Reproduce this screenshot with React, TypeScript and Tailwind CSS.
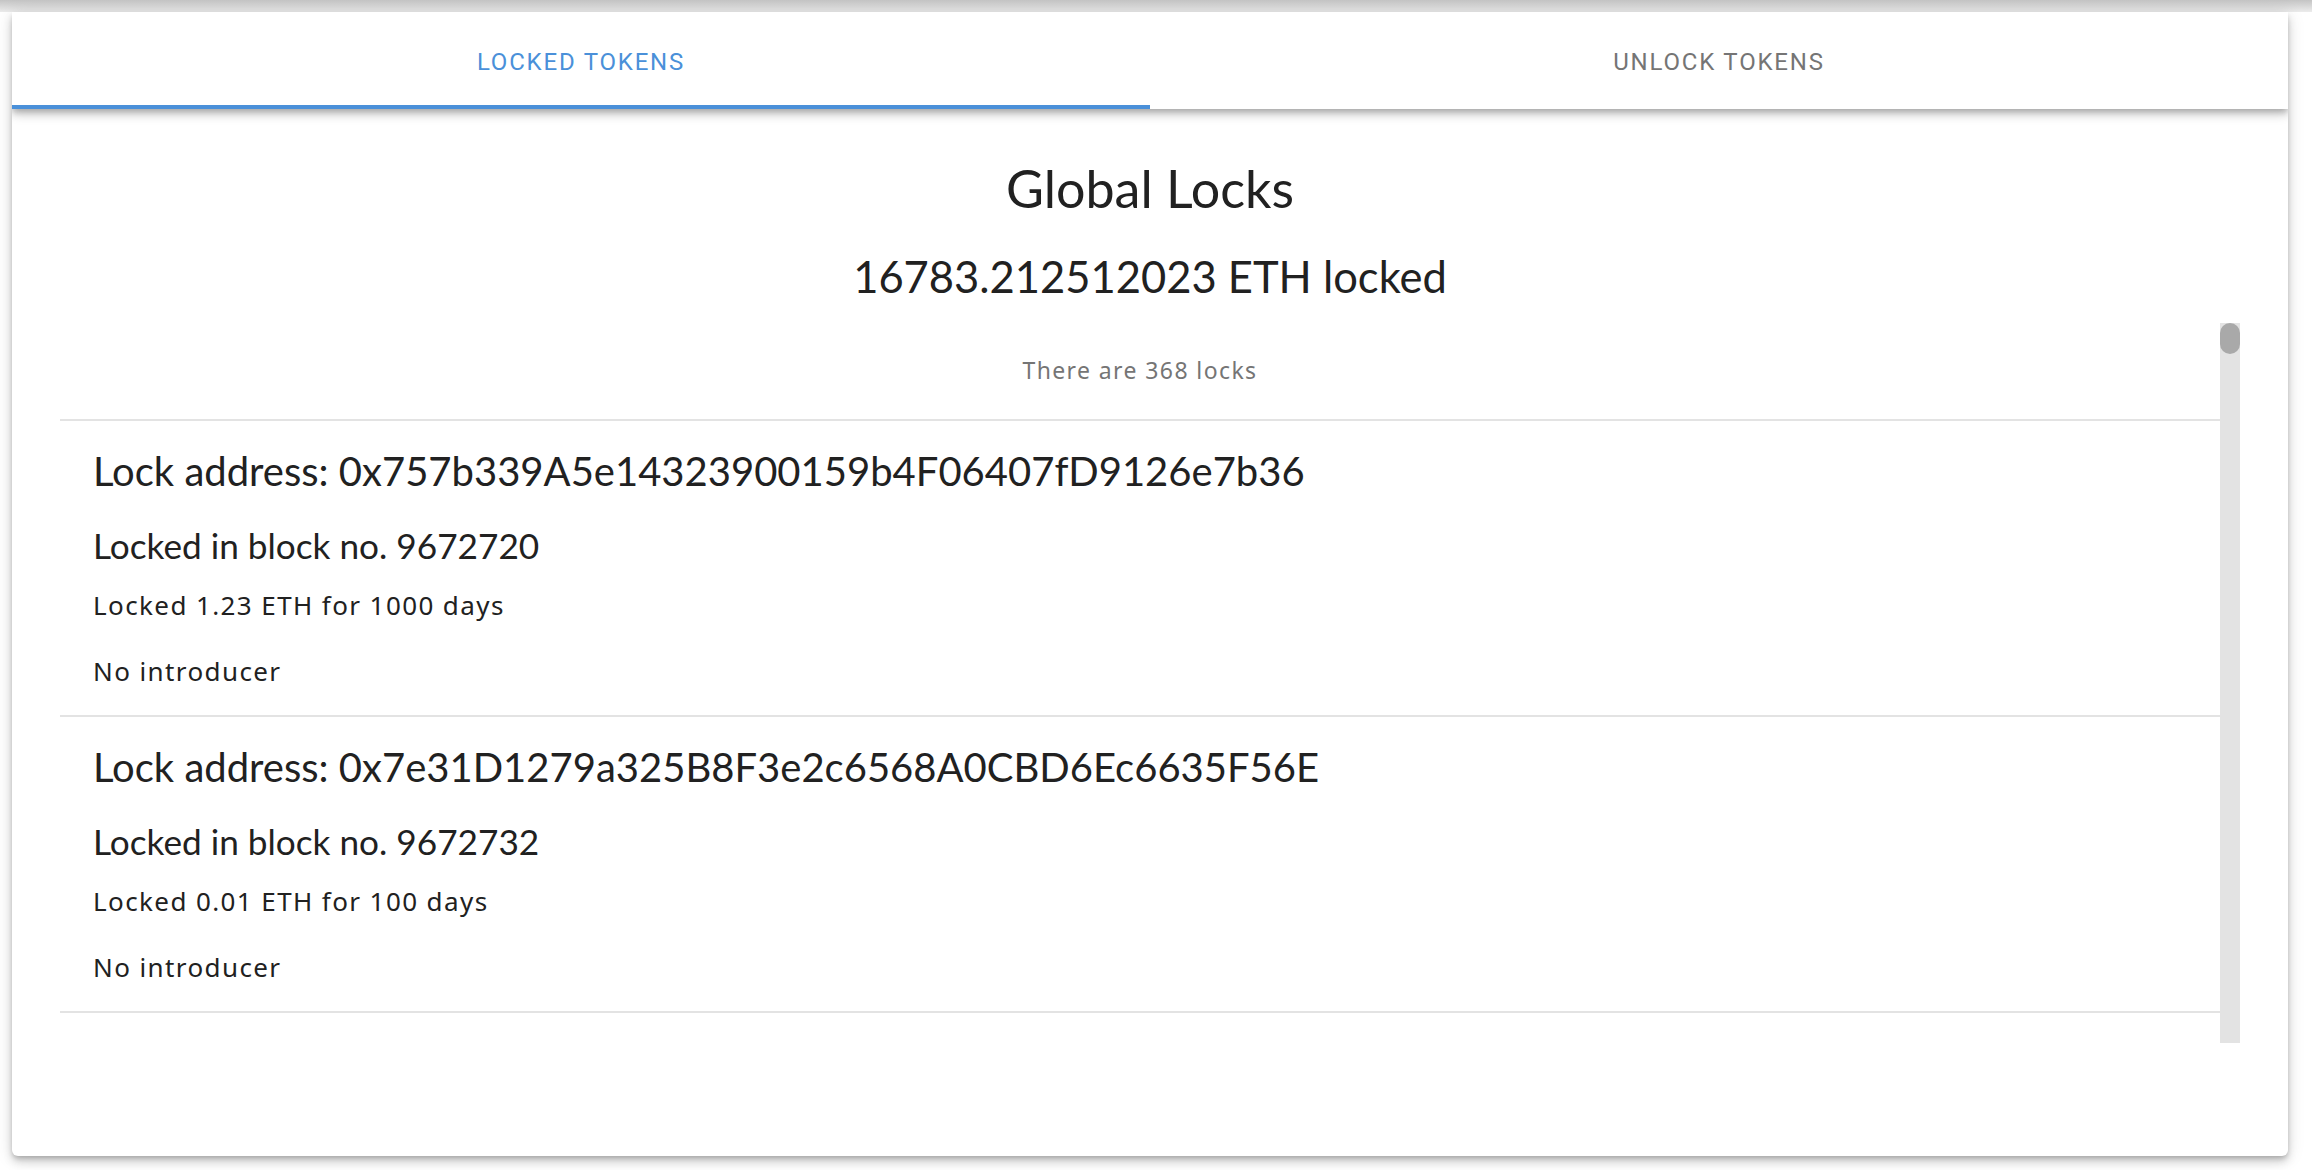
import { useState } from "react";

const locks = [
  { address: "0x757b339A5e14323900159b4F06407fD9126e7b36", block: 9672720, amount: "1.23", days: 1000 },
  { address: "0x7e31D1279a325B8F3e2c6568A0CBD6Ec6635F56E", block: 9672732, amount: "0.01", days: 100 },
];

const lato = "font-['Lato','Liberation_Sans',sans-serif]";
const body = "font-['Noto_Sans','Liberation_Sans',sans-serif]";

export default function App() {
  const [tab, setTab] = useState(0);
  const tabs = ["Locked tokens", "Unlock tokens"];

  return (
    <div className="min-h-screen bg-white">
      <div className="h-[12px] bg-gradient-to-b from-[#c4c4c4] to-[#ececec]" />
      <div className="ml-[12px] mr-[24px] h-[1144px] overflow-hidden rounded-b-[6px] bg-white shadow-[0_3px_5px_-1px_rgba(0,0,0,0.2),0_6px_10px_0_rgba(0,0,0,0.14),0_2px_18px_0_rgba(0,0,0,0.12)]">
        {/* Tabs */}
        <div className="relative z-10 flex h-[97px] bg-white shadow-[0_3px_6px_-1px_rgba(0,0,0,0.2),0_6px_8px_0_rgba(0,0,0,0.14),0_2px_15px_0_rgba(0,0,0,0.12)]">
          {tabs.map((t, i) => (
            <button
              key={t}
              onClick={() => setTab(i)}
              className={`relative flex flex-1 items-center justify-center pt-[2px] font-['Roboto',sans-serif] text-[24px] font-normal uppercase tracking-[1.8px] ${
                tab === i ? "text-[#4a90d9]" : "text-[#757575]"
              }`}
            >
              {t}
              {tab === i && <span className="absolute bottom-0 left-0 h-[4px] w-full bg-[#4a90d9]" />}
            </button>
          ))}
        </div>

        {/* Summary */}
        <div className="pt-[48px] text-center text-[#212121]">
          <h1 className={`${lato} text-[52px] leading-[63px]`}>Global Locks</h1>
          <h2 className={`${lato} mt-[30px] text-[43.5px] leading-[52px]`}>16783.212512023 ETH locked</h2>
        </div>

        {/* Lock list with its scrollbar */}
        <div className="mx-[48px] mt-[21px] flex h-[720px]">
          <div className="flex-1 overflow-hidden">
            <p className={`${body} pt-[32px] pb-[34px] text-center text-[23px] leading-[30px] tracking-[1.4px] text-[#757575]`}>
              There are 368 locks
            </p>
            <div className="border-t-2 border-[#e3e3e3]">
              {locks.map((l) => (
                <div key={l.address} className="border-b-2 border-[#e3e3e3] px-[33px] pt-[25px] pb-[26px] text-[#212121]">
                  <h3 className={`${lato} text-[40px] leading-[50px]`}>Lock address: {l.address}</h3>
                  <h4 className={`${lato} mt-[27px] text-[35.2px] leading-[44px]`}>Locked in block no. {l.block}</h4>
                  <p className={`${body} mt-[20px] text-[26px] leading-[36px] tracking-[1.4px]`}>
                    Locked {l.amount} ETH for {l.days} days
                  </p>
                  <p className={`${body} mt-[30px] text-[26px] leading-[36px] tracking-[1.4px]`}>No introducer</p>
                </div>
              ))}
            </div>
          </div>
          <div className="w-[20px] bg-[#e3e3e3]">
            <div className="h-[31px] rounded-full bg-[#a9a9a9]" />
          </div>
        </div>
      </div>
    </div>
  );
}
